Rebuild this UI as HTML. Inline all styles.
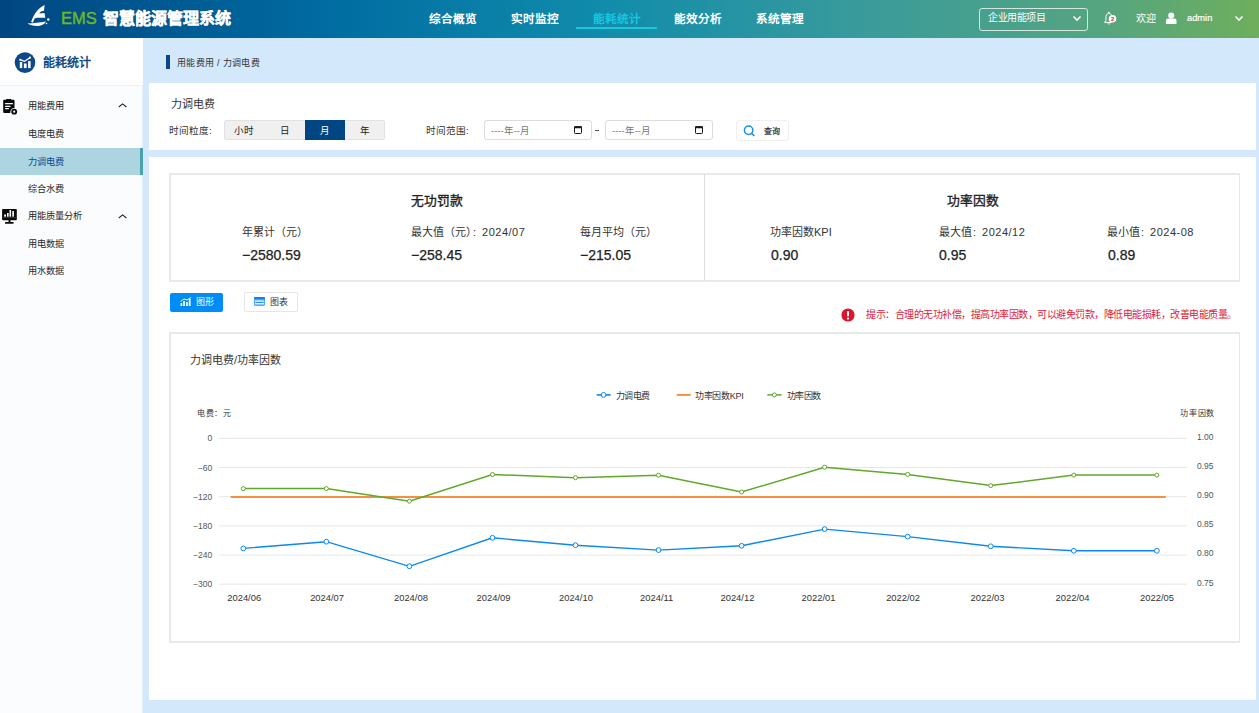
<!DOCTYPE html>
<html lang="zh-CN"><head><meta charset="utf-8">
<style>
*{margin:0;padding:0;box-sizing:border-box}
html,body{width:1259px;height:713px;overflow:hidden;font-family:"Liberation Sans",sans-serif;background:#d3e8fb;position:relative}
.a{position:absolute;white-space:nowrap}
#hdr{position:absolute;left:0;top:0;width:1259px;height:38px;background:linear-gradient(90deg,#004782 0%,#005890 12.3%,#006ca2 25.8%,#118cab 48%,#3a9b9b 68.7%,#55a57f 87.8%,#6eae5c 100%)}
.nav{position:absolute;top:10px;font-size:11.6px;line-height:18px;font-weight:bold;color:#fff;width:82px;text-align:center}
#side{position:absolute;left:0;top:38px;width:143px;height:675px;background:#fbfcfe;border-right:1px solid #e4f0fc}
#sidetop{position:absolute;left:0;top:0;width:143px;height:48px;background:#fff;border-bottom:1px solid #eef0f4}
.mi{position:absolute;left:28px;font-size:9.2px;line-height:12px;color:#1a1a1a}
.si{position:absolute;left:28px;font-size:9.2px;line-height:12px;color:#2a2a2a}
.panel{position:absolute;left:149px;width:1107px;background:#fff}
.seg{top:121px;height:20px;line-height:20px;font-size:9.5px;color:#222;text-align:center}
.inp{top:120px;width:108px;height:20px;border:1px solid #dcdcdc;border-radius:3px;background:#fff}
.ph{top:125px;font-size:9.5px;line-height:12px;color:#777}
.st{top:193px;text-align:center;font-size:12.8px;line-height:15px;color:#222;-webkit-text-stroke:0.35px #222}
.sl{top:226px;font-size:11px;line-height:13px;color:#333}
.sv{top:248px;font-size:14px;line-height:15px;color:#222;-webkit-text-stroke:0.25px #222}
.dg{letter-spacing:0.5px}
.lbl{font-size:9.6px;line-height:12px;color:#333}
</style></head><body>
<div id="hdr">
  <svg class="a" style="left:24px;top:2px" width="30" height="28" viewBox="0 0 30 28">
    <path fill="#fff" d="M20.6,3.1 C16,5 10,11 7.1,20 L9,20.5 C10,17 11,16 13,15.8 L21.3,15.7 L20.5,11 L15.3,11.4 C16,9.5 18,9 20,8.8 Z"/>
    <path fill="#fff" d="M3.1,21.4 C8,21.5 16,20.5 21.8,19.6 C21,21.5 19,23.5 14,24 C9,24 5,22.5 3.1,21.4 Z"/>
    <circle cx="24.3" cy="17.5" r="1.2" fill="#fff"/><circle cx="22.5" cy="21.5" r="0.8" fill="#fff"/>
  </svg>
  <div class="a" style="left:61px;top:8px;font-size:16.5px;line-height:20px;color:#6db52a;-webkit-text-stroke:0.45px #6db52a">EMS</div>
  <div class="a" style="left:103px;top:9px;font-size:16px;line-height:20px;font-weight:bold;color:#fff;-webkit-text-stroke:0.3px #fff">智慧能源管理系统</div>
  <div class="nav" style="left:412px">综合概览</div>
  <div class="nav" style="left:494px">实时监控</div>
  <div class="nav" style="left:576px;color:#17c6e2">能耗统计</div>
  <div class="a" style="left:576px;top:27px;width:81px;height:2px;background:#1cc6e0"></div>
  <div class="nav" style="left:657px">能效分析</div>
  <div class="nav" style="left:739px">系统管理</div>
  <div class="a" style="left:979px;top:8px;width:109px;height:23px;border:1px solid rgba(255,255,255,.75);border-radius:3px"></div>
  <div class="a" style="left:988px;top:11px;font-size:10px;letter-spacing:-0.5px;line-height:13px;color:#fff">企业用能项目</div>
  <svg class="a" style="left:1072px;top:15px" width="10" height="7" viewBox="0 0 10 7"><path d="M1.5,1.5 L5,5 L8.5,1.5" stroke="#fff" stroke-width="1.6" fill="none"/></svg>
  <svg class="a" style="left:1102px;top:10px" width="18" height="17" viewBox="0 0 18 17">
    <path d="M6.8,3.3 C4.6,3.6 3.9,5.6 3.9,8 L3.9,10.6 L2.6,12.4 L9.5,12.4" stroke="#fff" stroke-width="1" fill="none" stroke-linejoin="round"/>
    <path d="M6.8,3.3 C8.3,3.5 9.2,4.4 9.6,5.6" stroke="#fff" stroke-width="1" fill="none"/>
    <circle cx="6.8" cy="2.6" r="0.9" fill="#fff"/>
    <path d="M6,13.4 C6.3,14.6 7.7,14.6 8,13.4" stroke="#fff" stroke-width="0.9" fill="none"/>
    <circle cx="10.5" cy="8.8" r="3.8" fill="#fff"/>
    <text x="10.5" y="10.9" font-size="5.8" font-weight="bold" fill="#e0102a" text-anchor="middle" font-family="Liberation Sans">2</text>
  </svg>
  <div class="a" style="left:1136px;top:12px;font-size:10px;line-height:13px;color:#fff">欢迎</div>
  <svg class="a" style="left:1165px;top:12px" width="13" height="13" viewBox="0 0 13 13">
    <circle cx="6.2" cy="3.6" r="3" fill="#fff"/><path d="M1,12 L1,8.5 C1,7 2.5,6.6 4,6.6 L8.5,6.6 C10,6.6 11.5,7 11.5,8.5 L11.5,12 Z" fill="#fff"/>
  </svg>
  <div class="a" style="left:1187px;top:12px;font-size:9.3px;line-height:13px;color:#fff;-webkit-text-stroke:0.2px #fff">admin</div>
  <svg class="a" style="left:1234px;top:15px" width="10" height="7" viewBox="0 0 10 7"><path d="M1.5,1.5 L5,5 L8.5,1.5" stroke="#fff" stroke-width="1.6" fill="none"/></svg>
</div>

<div id="side">
  <div id="sidetop"></div>
  <svg class="a" style="left:14px;top:14px" width="22" height="22" viewBox="0 0 22 22">
    <circle cx="11" cy="10.6" r="10.3" fill="#0c488a"/>
    <rect x="5.8" y="10" width="2.4" height="6.1" fill="#fff"/><rect x="9.9" y="11.5" width="2.7" height="4.6" fill="#fff"/><rect x="14.1" y="9.1" width="2.5" height="7" fill="#fff"/>
    <path d="M6.2,7.7 L10.6,9.3 L15.9,5.7" stroke="#fff" stroke-width="1.3" stroke-linecap="round" stroke-linejoin="round" fill="none"/>
    <circle cx="6.2" cy="7.7" r="1" fill="#fff"/><circle cx="15.9" cy="5.7" r="1.1" fill="#fff"/>
  </svg>
  <div class="a" style="left:43px;top:17px;font-size:12px;line-height:16px;font-weight:bold;color:#124a85">能耗统计</div>

  <svg class="a" style="left:2px;top:60px" width="18" height="18" viewBox="0 0 18 18">
    <path d="M1.2,2.6 Q1.2,1.8 2,1.8 L4,1.8 L4.6,0.9 L8.8,0.9 L9.4,1.8 L11.7,1.8 Q12.5,1.8 12.5,2.6 L12.5,9.9 A4.2,4.2 0 0 0 8.3,14.9 L2,14.9 Q1.2,14.9 1.2,14.1 Z" fill="#0a0a0a"/>
    <rect x="3" y="5" width="8" height="1.3" rx="0.6" fill="#fff"/><rect x="3" y="7.8" width="5.6" height="1.2" rx="0.6" fill="#fff"/><rect x="3" y="10" width="4" height="1.2" rx="0.6" fill="#fff"/>
    <circle cx="12.2" cy="13.7" r="2.9" fill="#0a0a0a"/><circle cx="12.2" cy="13.7" r="1.1" fill="#fff"/>
  </svg>
  <div class="mi" style="top:62px">用能费用</div>
  <svg class="a" style="left:117px;top:64px" width="11" height="6" viewBox="0 0 11 6"><path d="M1.8,5 L5.6,1.9 L9.4,5" stroke="#222" stroke-width="1.1" fill="none"/></svg>
  <div class="si" style="top:90px">电度电费</div>
  <div class="a" style="left:0;top:110px;width:143px;height:27px;background:#acd5e1;border-right:3px solid #4aa3a8"></div>
  <div class="si" style="top:118px;color:#0b4a8f">力调电费</div>
  <div class="si" style="top:145px">综合水费</div>
  <svg class="a" style="left:2px;top:170px" width="16" height="17" viewBox="0 0 16 17">
    <rect x="0.1" y="0.9" width="14.7" height="11.3" rx="0.8" fill="#0a0a0a"/>
    <rect x="2.2" y="6.5" width="1.8" height="2.2" fill="#fff"/><rect x="5" y="5" width="1.6" height="3.7" fill="#fff"/><rect x="7.5" y="2" width="1.6" height="6.7" fill="#fff"/><rect x="10.3" y="3" width="1.6" height="5.7" fill="#fff"/>
    <rect x="1" y="9.4" width="13" height="0.5" fill="#555"/>
    <rect x="6.5" y="12" width="2" height="2.2" fill="#0a0a0a"/><rect x="3" y="14" width="8.5" height="1.8" rx="0.4" fill="#0a0a0a"/>
  </svg>
  <div class="mi" style="top:172px">用能质量分析</div>
  <svg class="a" style="left:117px;top:175px" width="11" height="6" viewBox="0 0 11 6"><path d="M1.8,5 L5.6,1.9 L9.4,5" stroke="#222" stroke-width="1.1" fill="none"/></svg>
  <div class="si" style="top:200px">用电数据</div>
  <div class="si" style="top:227px">用水数据</div>
</div>

<!-- breadcrumb -->
<div class="a" style="left:166px;top:55px;width:4px;height:14px;background:#0b4688"></div>
<div class="a" style="left:177px;top:57px;font-size:9px;letter-spacing:0.3px;line-height:13px;color:#333">用能费用 / 力调电费</div>

<!-- panel 1 -->
<div class="panel" style="top:83px;height:67px"></div>
<div class="a" style="left:171px;top:97px;font-size:11px;line-height:14px;color:#333">力调电费</div>
<div class="a lbl" style="left:169px;top:125px">时间粒度:</div>

<!-- panel 2 -->
<div class="panel" style="top:157px;height:543px"></div>


<!-- segmented -->
<div class="a" style="left:224px;top:120px;width:161px;height:20px;background:#f0f0f0;border:1px solid #e2e2e2;border-radius:2px"></div>
<div class="a" style="left:305px;top:120px;width:40px;height:20px;background:#004682"></div>
<div class="a seg" style="left:224px;width:40px">小时</div>
<div class="a seg" style="left:264px;width:41px">日</div>
<div class="a seg" style="left:305px;width:40px;color:#fff">月</div>
<div class="a seg" style="left:345px;width:40px">年</div>
<div class="a lbl" style="left:426px;top:125px">时间范围:</div>
<div class="a inp" style="left:484px"></div>
<div class="a ph" style="left:491px">----年--月</div>
<svg class="a" style="left:574px;top:126px" width="8" height="8" viewBox="0 0 8 8"><rect x="0.5" y="0.7" width="7" height="6.8" rx="0.8" fill="none" stroke="#1a1a1a" stroke-width="1"/><rect x="0" y="0.2" width="8" height="2.1" rx="0.6" fill="#1a1a1a"/></svg>
<div class="a" style="left:595px;top:130px;width:4px;height:1px;background:#555"></div>
<div class="a inp" style="left:605px"></div>
<div class="a ph" style="left:612px">----年--月</div>
<svg class="a" style="left:695px;top:126px" width="8" height="8" viewBox="0 0 8 8"><rect x="0.5" y="0.7" width="7" height="6.8" rx="0.8" fill="none" stroke="#1a1a1a" stroke-width="1"/><rect x="0" y="0.2" width="8" height="2.1" rx="0.6" fill="#1a1a1a"/></svg>
<div class="a" style="left:736px;top:120px;width:53px;height:21px;border:1px solid #f0f0f0;border-radius:3px"></div>
<svg class="a" style="left:743px;top:125px" width="13" height="12" viewBox="0 0 13 12"><circle cx="5.6" cy="5.3" r="4.2" fill="none" stroke="#1a8fe8" stroke-width="1.5"/><path d="M8.6,8.4 L11.4,11" stroke="#1a8fe8" stroke-width="1.6"/></svg>
<div class="a" style="left:764px;top:126px;font-size:8px;line-height:11px;color:#222;-webkit-text-stroke:0.2px #222">查询</div>

<!-- stats -->
<div class="a" style="left:169px;top:173px;width:1071px;height:109px;border:2px solid #e9e9e9;border-right-width:1px"></div>
<div class="a" style="left:704px;top:174px;width:1px;height:107px;background:#dedede"></div>
<div class="a st" style="left:169px;width:536px">无功罚款</div>
<div class="a st" style="left:705px;width:535px">功率因数</div>
<div class="a sl" style="left:242px">年累计（元）</div>
<div class="a sv" style="left:242px">−2580.59</div>
<div class="a sl" style="left:411px">最大值（元<span style="letter-spacing:-4px">）</span><span style="margin-left:0px">:</span><span class="dg" style="margin-left:6px">2024/07</span></div>
<div class="a sv" style="left:411px">−258.45</div>
<div class="a sl" style="left:580px">每月平均（元）</div>
<div class="a sv" style="left:580px">−215.05</div>
<div class="a sl" style="left:770px">功率因数<span class="dg" style="letter-spacing:0">KPI</span></div>
<div class="a sv" style="left:771px">0.90</div>
<div class="a sl" style="left:939px">最大值<span style="margin-left:1px">:</span><span class="dg" style="margin-left:6px">2024/12</span></div>
<div class="a sv" style="left:939px">0.95</div>
<div class="a sl" style="left:1107px">最小值<span style="margin-left:1px">:</span><span class="dg" style="margin-left:6px">2024-08</span></div>
<div class="a sv" style="left:1108px">0.89</div>

<!-- buttons -->
<div class="a" style="left:170px;top:293px;width:53px;height:19px;background:#008cf5;border-radius:2px"></div>
<svg class="a" style="left:180px;top:297px" width="12" height="9" viewBox="0 0 12 9"><rect x="0.5" y="6" width="1.8" height="3" fill="#fff"/><rect x="3.2" y="4" width="1.8" height="5" fill="#fff"/><rect x="6" y="5" width="1.8" height="4" fill="#fff"/><rect x="8.8" y="2" width="1.8" height="7" fill="#fff"/><path d="M0.5,4.5 L4,2 L7,3 L11,0.5" stroke="#fff" stroke-width="0.9" fill="none"/></svg>
<div class="a" style="left:196px;top:297px;font-size:9px;line-height:11px;color:#fff">图形</div>
<div class="a" style="left:244px;top:292px;width:54px;height:20px;background:#fff;border:1px solid #e6e6e6;border-radius:2px"></div>
<svg class="a" style="left:254px;top:297px" width="11" height="9" viewBox="0 0 11 9"><rect x="0.4" y="0.4" width="10.2" height="8.2" rx="1" fill="#7fc0fa" stroke="#2a95f5" stroke-width="0.8"/><rect x="0" y="0" width="11" height="2.6" rx="1" fill="#0a84ee"/><rect x="1.2" y="3.6" width="8.6" height="1.1" fill="#e8f4ff"/><rect x="1.2" y="6" width="8.6" height="1.1" fill="#e8f4ff"/><rect x="2" y="5" width="7" height="0.9" fill="#1a8cf0"/></svg>
<div class="a" style="left:270px;top:297px;font-size:9px;line-height:11px;color:#333">图表</div>

<!-- tip -->
<svg class="a" style="left:841px;top:308px" width="14" height="14" viewBox="0 0 14 14"><circle cx="7" cy="7" r="6.6" fill="#d9162e"/><rect x="6" y="3" width="2" height="5.5" rx="1" fill="#fff"/><circle cx="7" cy="10.6" r="1.1" fill="#fff"/></svg>
<div class="a" style="left:866px;top:309px;font-size:10px;letter-spacing:-0.5px;line-height:12px;color:#e0223a">提示：合理的无功补偿，提高功率因数，可以避免罚款，降低电能损耗，改善电能质量。</div>

<!-- chart box -->
<div class="a" style="left:169px;top:332px;width:1071px;height:311px;border:2px solid #e9e9e9;border-right-width:1px"></div>
<div class="a" style="left:190px;top:353px;font-size:11px;line-height:14px;color:#333">力调电费/功率因数</div>

<svg class="a" style="left:0;top:0" width="1259" height="713" viewBox="0 0 1259 713" font-family="Liberation Sans">
<line x1="219.2" y1="438.40" x2="1187" y2="438.40" stroke="#e6e6e6" stroke-width="1"/>
<line x1="219.2" y1="467.56" x2="1187" y2="467.56" stroke="#e6e6e6" stroke-width="1"/>
<line x1="219.2" y1="496.72" x2="1187" y2="496.72" stroke="#e6e6e6" stroke-width="1"/>
<line x1="219.2" y1="525.88" x2="1187" y2="525.88" stroke="#e6e6e6" stroke-width="1"/>
<line x1="219.2" y1="555.04" x2="1187" y2="555.04" stroke="#e6e6e6" stroke-width="1"/>
<line x1="219.2" y1="584.20" x2="1187" y2="584.20" stroke="#e6e6e6" stroke-width="1"/>
<text x="212.3" y="441.40" font-size="8.5" fill="#555" text-anchor="end">0</text>
<text x="1197" y="439.80" font-size="8.5" fill="#555">1.00</text>
<text x="212.3" y="470.56" font-size="8.5" fill="#555" text-anchor="end">−60</text>
<text x="1197" y="468.96" font-size="8.5" fill="#555">0.95</text>
<text x="212.3" y="499.72" font-size="8.5" fill="#555" text-anchor="end">−120</text>
<text x="1197" y="498.12" font-size="8.5" fill="#555">0.90</text>
<text x="212.3" y="528.88" font-size="8.5" fill="#555" text-anchor="end">−180</text>
<text x="1197" y="527.28" font-size="8.5" fill="#555">0.85</text>
<text x="212.3" y="558.04" font-size="8.5" fill="#555" text-anchor="end">−240</text>
<text x="1197" y="556.44" font-size="8.5" fill="#555">0.80</text>
<text x="212.3" y="587.20" font-size="8.5" fill="#555" text-anchor="end">−300</text>
<text x="1197" y="585.60" font-size="8.5" fill="#555">0.75</text>
<text x="244.2" y="601" font-size="9.4" fill="#333" text-anchor="middle">2024/06</text>
<text x="327.1" y="601" font-size="9.4" fill="#333" text-anchor="middle">2024/07</text>
<text x="410.9" y="601" font-size="9.4" fill="#333" text-anchor="middle">2024/08</text>
<text x="493.5" y="601" font-size="9.4" fill="#333" text-anchor="middle">2024/09</text>
<text x="575.9" y="601" font-size="9.4" fill="#333" text-anchor="middle">2024/10</text>
<text x="656.7" y="601" font-size="9.4" fill="#333" text-anchor="middle">2024/11</text>
<text x="737.4" y="601" font-size="9.4" fill="#333" text-anchor="middle">2024/12</text>
<text x="818.5" y="601" font-size="9.4" fill="#333" text-anchor="middle">2022/01</text>
<text x="903.1" y="601" font-size="9.4" fill="#333" text-anchor="middle">2022/02</text>
<text x="987.5" y="601" font-size="9.4" fill="#333" text-anchor="middle">2022/03</text>
<text x="1072.5" y="601" font-size="9.4" fill="#333" text-anchor="middle">2022/04</text>
<text x="1157" y="601" font-size="9.4" fill="#333" text-anchor="middle">2022/05</text>
<text x="197" y="416.3" font-size="8" letter-spacing="0.6" fill="#333">电费：元</text>
<text x="1180" y="416.3" font-size="8" letter-spacing="0.75" fill="#333">功率因数</text>
<line x1="230.7" y1="496.9" x2="1165.8" y2="496.9" stroke="#f5913e" stroke-width="2"/>
<polyline fill="none" stroke="#5fa82a" stroke-width="1.5" points="243.30,488.6 326.35,488.6 409.40,501.2 492.45,474.5 575.50,477.7 658.55,475.2 741.60,492 824.65,467.2 907.70,474.4 990.75,485.6 1073.80,475.1 1156.85,475.1"/>
<polyline fill="none" stroke="#0a88f0" stroke-width="1.4" points="243.30,548.4 326.35,541.7 409.40,566.3 492.45,537.8 575.50,545.2 658.55,550.1 741.60,545.8 824.65,529.1 907.70,536.6 990.75,546.3 1073.80,550.8 1156.85,550.8"/>
<circle cx="243.30" cy="488.6" r="2" fill="#fff" stroke="#5fa82a" stroke-width="1"/>
<circle cx="326.35" cy="488.6" r="2" fill="#fff" stroke="#5fa82a" stroke-width="1"/>
<circle cx="409.40" cy="501.2" r="2" fill="#fff" stroke="#5fa82a" stroke-width="1"/>
<circle cx="492.45" cy="474.5" r="2" fill="#fff" stroke="#5fa82a" stroke-width="1"/>
<circle cx="575.50" cy="477.7" r="2" fill="#fff" stroke="#5fa82a" stroke-width="1"/>
<circle cx="658.55" cy="475.2" r="2" fill="#fff" stroke="#5fa82a" stroke-width="1"/>
<circle cx="741.60" cy="492" r="2" fill="#fff" stroke="#5fa82a" stroke-width="1"/>
<circle cx="824.65" cy="467.2" r="2" fill="#fff" stroke="#5fa82a" stroke-width="1"/>
<circle cx="907.70" cy="474.4" r="2" fill="#fff" stroke="#5fa82a" stroke-width="1"/>
<circle cx="990.75" cy="485.6" r="2" fill="#fff" stroke="#5fa82a" stroke-width="1"/>
<circle cx="1073.80" cy="475.1" r="2" fill="#fff" stroke="#5fa82a" stroke-width="1"/>
<circle cx="1156.85" cy="475.1" r="2" fill="#fff" stroke="#5fa82a" stroke-width="1"/>
<circle cx="243.30" cy="548.4" r="2.4" fill="#fff" stroke="#0a88f0" stroke-width="1"/>
<circle cx="326.35" cy="541.7" r="2.4" fill="#fff" stroke="#0a88f0" stroke-width="1"/>
<circle cx="409.40" cy="566.3" r="2.4" fill="#fff" stroke="#0a88f0" stroke-width="1"/>
<circle cx="492.45" cy="537.8" r="2.4" fill="#fff" stroke="#0a88f0" stroke-width="1"/>
<circle cx="575.50" cy="545.2" r="2.4" fill="#fff" stroke="#0a88f0" stroke-width="1"/>
<circle cx="658.55" cy="550.1" r="2.4" fill="#fff" stroke="#0a88f0" stroke-width="1"/>
<circle cx="741.60" cy="545.8" r="2.4" fill="#fff" stroke="#0a88f0" stroke-width="1"/>
<circle cx="824.65" cy="529.1" r="2.4" fill="#fff" stroke="#0a88f0" stroke-width="1"/>
<circle cx="907.70" cy="536.6" r="2.4" fill="#fff" stroke="#0a88f0" stroke-width="1"/>
<circle cx="990.75" cy="546.3" r="2.4" fill="#fff" stroke="#0a88f0" stroke-width="1"/>
<circle cx="1073.80" cy="550.8" r="2.4" fill="#fff" stroke="#0a88f0" stroke-width="1"/>
<circle cx="1156.85" cy="550.8" r="2.4" fill="#fff" stroke="#0a88f0" stroke-width="1"/>
<line x1="596.7" y1="394.9" x2="610.6" y2="394.9" stroke="#0a88f0" stroke-width="1.6"/><circle cx="603.6" cy="394.9" r="2.4" fill="#fff" stroke="#0a88f0" stroke-width="1"/>
<text x="615.5" y="398.6" font-size="9" letter-spacing="-0.5" fill="#333">力调电费</text>
<line x1="676.7" y1="394.9" x2="690.6" y2="394.9" stroke="#f5913e" stroke-width="2"/>
<text x="695" y="398.6" font-size="9" letter-spacing="-0.3" fill="#333">功率因数KPI</text>
<line x1="767.3" y1="394.9" x2="781.6" y2="394.9" stroke="#5fa82a" stroke-width="1.5"/><circle cx="774.4" cy="394.9" r="2" fill="#fff" stroke="#5fa82a" stroke-width="1"/>
<text x="786.5" y="398.6" font-size="9" letter-spacing="-0.5" fill="#333">功率因数</text>
</svg>
</body></html>
